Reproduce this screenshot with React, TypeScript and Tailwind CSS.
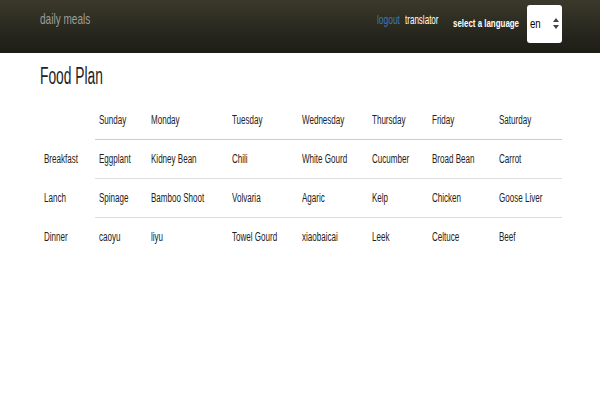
import React from 'react'

const days = ['Sunday', 'Monday', 'Tuesday', 'Wednesday', 'Thursday', 'Friday', 'Saturday']

const meals: { name: string; items: string[] }[] = [
  { name: 'Breakfast', items: ['Eggplant', 'Kidney Bean', 'Chili', 'White Gourd', 'Cucumber', 'Broad Bean', 'Carrot'] },
  { name: 'Lanch', items: ['Spinage', 'Bamboo Shoot', 'Volvaria', 'Agaric', 'Kelp', 'Chicken', 'Goose Liver'] },
  { name: 'Dinner', items: ['caoyu', 'liyu', 'Towel Gourd', 'xiaobaicai', 'Leek', 'Celtuce', 'Beef'] },
]

const widths = ['w-[52px]', 'w-[81px]', 'w-[70px]', 'w-[70px]', 'w-[60px]', 'w-[67px]', 'w-[63px]']

// the screenshot's font is very narrow (Helvetica Neue, squeezed), so squeeze Liberation Sans
function T({ children, className = 'scale-x-[0.67]' }: { children: React.ReactNode; className?: string }) {
  return <span className={`inline-block whitespace-nowrap origin-left ${className}`}>{children}</span>
}

export default function App() {
  return (
    <div className="w-[600px] h-[400px] bg-white font-['Liberation_Sans',Arial,sans-serif] text-[#333]">
      <nav className="h-[53px] bg-gradient-to-b from-[#3a392b] to-[#1d1c16] flex items-center pl-[40px] pr-[38px]">
        <div className="w-[60px] -mt-[14px] text-[#9d9d9d] text-[15px]">
          <T>daily meals</T>
        </div>
        <div className="ml-auto flex items-center -mt-[6px]">
          <div className="w-[28px] -mt-[8px] text-[#3a78b8] text-[12px]">
            <T className="scale-x-[0.7]">logout</T>
          </div>
          <div className="w-[48px] -mt-[8px] text-white text-[12px]">
            <T className="scale-x-[0.67]">translator</T>
          </div>
          <div className="w-[74px] text-white text-[11px] font-bold">
            <T className="scale-x-[0.72]">select a language</T>
          </div>
          <div className="w-[35px] h-[38px] bg-white rounded-[3px] flex items-center pl-[3px] pr-[3px] text-[12px] text-black">
            <T className="scale-x-[0.8]">en</T>
            <svg className="ml-auto" width="6" height="11" viewBox="0 0 6 11">
              <path d="M3 0L6 4H0Z M3 11L6 7H0Z" fill="#444" />
            </svg>
          </div>
        </div>
      </nav>
      <div className="pl-[40px] pt-[11px]">
        <h1 className="text-[23px] text-[#222] leading-[24px]">
          <T className="scale-x-[0.6]">Food Plan</T>
        </h1>
        <div className="mt-[13px] text-[12px] text-[#222]">
          <div className="flex h-[38px] items-center">
            <div className="w-[55px]" />
            <div className="flex flex-1 mr-[38px] pl-[4px]">
              {days.map((d, i) => (
                <div key={d} className={widths[i]}><T>{d}</T></div>
              ))}
            </div>
          </div>
          {meals.map((m, r) => (
            <div key={m.name} className="flex h-[39px] items-center">
              <div className="w-[55px] pl-[4px]"><T>{m.name}</T></div>
              <div className={`flex flex-1 mr-[38px] pl-[4px] h-full items-center border-t ${r === 0 ? 'border-[#ccc]' : 'border-[#ddd]'}`}>
                {m.items.map((it, i) => (
                  <div key={it} className={widths[i]}><T>{it}</T></div>
                ))}
              </div>
            </div>
          ))}
        </div>
      </div>
    </div>
  )
}
